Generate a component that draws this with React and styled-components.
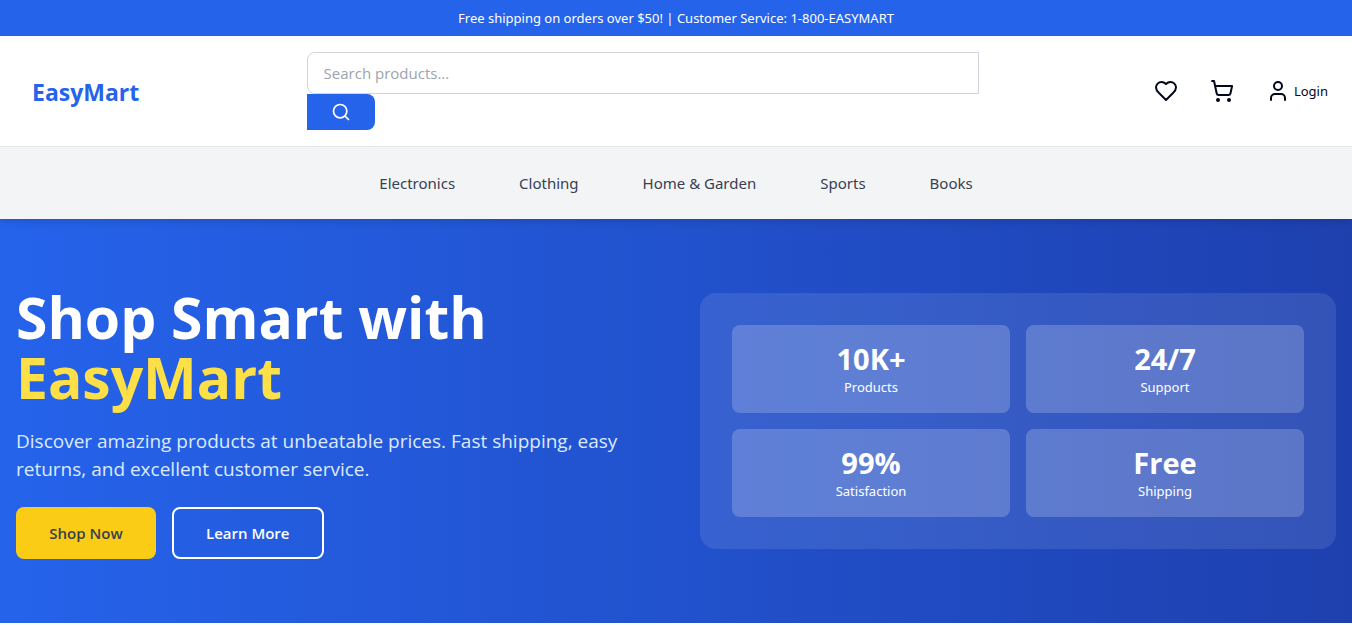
import React from "react";
import styled, { createGlobalStyle } from "styled-components";
import { Search, ShoppingCart, User } from "lucide-react";

const GlobalStyle = createGlobalStyle`
  *, *::before, *::after { box-sizing: border-box; }
  body {
    margin: 0;
    background: #ffffff;
    color: #020817;
    font-family: "Noto Sans", "Open Sans", sans-serif;
    font-size: 15px;
    line-height: 24px;
  }
  h1, p, ul, dl, dd { margin: 0; padding: 0; }
  a { color: inherit; text-decoration: none; }
  button, input { font: inherit; }
`;

const TopBar = styled.p`
  padding: 8px 16px;
  background: #2563eb;
  color: #ffffff;
  font-size: 13px;
  line-height: 20px;
  text-align: center;
`;

const Header = styled.header`
  position: relative;
  box-shadow: 0 4px 6px rgba(0, 0, 0, 0.1);
`;

const HeaderRow = styled.div`
  display: flex;
  align-items: center;
  justify-content: space-between;
  padding: 16px;
`;

const Logo = styled.a`
  padding: 2px 0 0 16px;
  color: #2563eb;
  font-family: "Open Sans", sans-serif;
  font-size: 23px;
  font-weight: 700;
  line-height: 32px;
`;

const SearchForm = styled.form`
  flex: 0 1 672px;
  display: flex;
  flex-direction: column;
  align-items: flex-start;
`;

const SearchInput = styled.input`
  width: 100%;
  height: 42px;
  padding: 8px 16px;
  border: 1px solid #d1d5db;
  border-radius: 8px 0 0 8px;
  background: #ffffff;
  color: #020817;
  font-family: "Open Sans", sans-serif;
  &::placeholder { color: #9ca3af; opacity: 1; }
`;

const SearchButton = styled.button`
  display: flex;
  padding: 8px 24px;
  border: 0;
  border-radius: 0 8px 8px 0;
  background: #2563eb;
  color: #ffffff;
`;

const Actions = styled.div`
  display: flex;
  align-items: center;
  gap: 16px;
`;

const Action = styled.button`
  display: flex;
  align-items: center;
  gap: 4px;
  padding: 8px;
  border: 0;
  background: none;
  color: #020817;
  font-size: 13px;
  line-height: 20px;
`;

const Nav = styled.nav`
  border-top: 1px solid #e5e7eb;
  background: #f3f4f6;
`;

const NavList = styled.ul`
  display: flex;
  justify-content: center;
  gap: 64px;
  padding: 24px 16px;
  list-style: none;
  color: #374151;
`;

const Hero = styled.section`
  padding: 64px 16px;
  background: linear-gradient(to right, #2563eb, #1e40af);
  color: #ffffff;
  font-family: "Open Sans", sans-serif;
`;

const HeroGrid = styled.div`
  display: grid;
  grid-template-columns: 1fr 1fr;
  align-items: center;
  gap: 48px;
`;

const Title = styled.h1`
  padding-top: 4px;
  margin-bottom: 20px;
  font-size: 57px;
  font-weight: 700;
  line-height: 60px;
`;

const Highlight = styled.span`
  display: block;
  color: #fde047;
`;

const Lead = styled.p`
  margin-bottom: 24px;
  color: #dbeafe;
  font-size: 19px;
  line-height: 28px;
`;

const ButtonRow = styled.div`
  display: flex;
  gap: 16px;
`;

const HeroButton = styled.button`
  min-width: 140px;
  height: 52px;
  padding: 0 32px;
  border: ${(p) => (p.$outline ? "2px solid #ffffff" : "0")};
  border-radius: 8px;
  background: ${(p) => (p.$outline ? "transparent" : "#facc15")};
  color: ${(p) => (p.$outline ? "#ffffff" : "#374151")};
  font-weight: 600;
`;

const StatsPanel = styled.dl`
  display: grid;
  grid-template-columns: 1fr 1fr;
  gap: 16px;
  padding: 32px;
  border-radius: 16px;
  background: rgba(255, 255, 255, 0.1);
`;

const Stat = styled.div`
  display: flex;
  flex-direction: column-reverse;
  padding: 16px;
  border-radius: 8px;
  background: rgba(255, 255, 255, 0.2);
  text-align: center;
`;

const StatValue = styled.dd`
  font-size: 29px;
  font-weight: 700;
  line-height: 36px;
`;

const StatLabel = styled.dt`
  font-family: "Noto Sans", sans-serif;
  font-size: 13px;
  line-height: 20px;
`;

function HeartIcon() {
  return (
    <svg width="24" height="24" viewBox="0 0 24 24" fill="none" stroke="currentColor" strokeWidth="2" strokeLinecap="round" strokeLinejoin="round" aria-hidden="true">
      <path d="M19 14c1.49-1.46 3-3.21 3-5.5A5.5 5.5 0 0 0 16.5 3c-1.76 0-3 .5-4.5 2-1.5-1.5-2.74-2-4.5-2A5.5 5.5 0 0 0 2 8.5c0 2.3 1.5 4.05 3 5.5l7 7Z" />
    </svg>
  );
}

const categories = ["Electronics", "Clothing", "Home & Garden", "Sports", "Books"];

const stats = [
  { value: "10K+", label: "Products" },
  { value: "24/7", label: "Support" },
  { value: "99%", label: "Satisfaction" },
  { value: "Free", label: "Shipping" },
];

export default function App() {
  return (
    <>
      <GlobalStyle />
      <TopBar>Free shipping on orders over $50! | Customer Service: 1-800-EASYMART</TopBar>
      <Header>
        <HeaderRow>
          <Logo href="#">EasyMart</Logo>
          <SearchForm role="search" onSubmit={(e) => e.preventDefault()}>
            <SearchInput type="search" aria-label="Search products" placeholder="Search products..." />
            <SearchButton type="submit" aria-label="Search">
              <Search size={20} />
            </SearchButton>
          </SearchForm>
          <Actions>
            <Action type="button" aria-label="Wishlist"><HeartIcon /></Action>
            <Action type="button" aria-label="Cart"><ShoppingCart size={24} /></Action>
            <Action type="button"><User size={24} />Login</Action>
          </Actions>
        </HeaderRow>
        <Nav aria-label="Categories">
          <NavList>
            {categories.map((name) => (
              <li key={name}><a href="#">{name}</a></li>
            ))}
          </NavList>
        </Nav>
      </Header>
      <Hero>
        <HeroGrid>
          <div>
            <Title>Shop Smart with <Highlight>EasyMart</Highlight></Title>
            <Lead>Discover amazing products at unbeatable prices. Fast shipping, easy returns, and excellent customer service.</Lead>
            <ButtonRow>
              <HeroButton type="button">Shop Now</HeroButton>
              <HeroButton type="button" $outline>Learn More</HeroButton>
            </ButtonRow>
          </div>
          <StatsPanel>
            {stats.map((s) => (
              <Stat key={s.label}>
                <StatLabel>{s.label}</StatLabel>
                <StatValue>{s.value}</StatValue>
              </Stat>
            ))}
          </StatsPanel>
        </HeroGrid>
      </Hero>
    </>
  );
}
